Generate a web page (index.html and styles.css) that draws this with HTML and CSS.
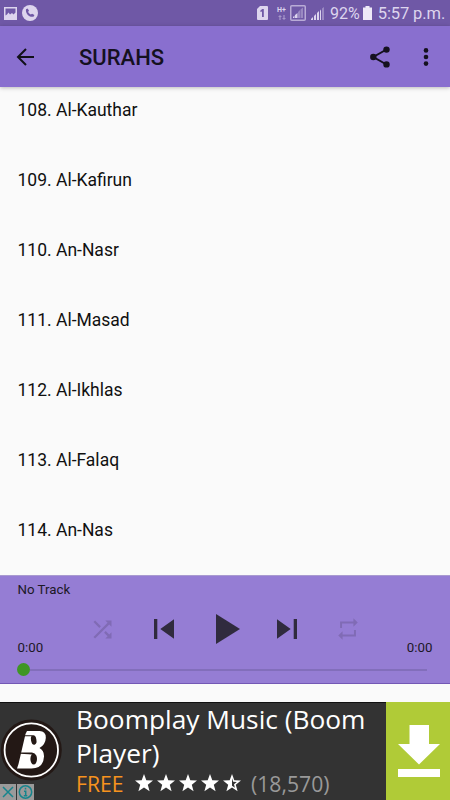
FILE: index.html
```html
<!DOCTYPE html>
<html lang="en">
<head>
<meta charset="utf-8">
<title>Surahs</title>
<link rel="stylesheet" href="styles.css">
</head>
<body>
<div class="screen">
  <div class="status">
    <svg class="st-photo" width="13" height="13" viewBox="0 0 13 13"><path fill-rule="evenodd" d="M0 0h13v13H0zM1.500 1.500v7l1.500-1 1.500-2 1.500 2 2-1.500 1.500 1.500 2-2V1.500z"/></svg>
    <svg class="st-call" width="16" height="16" viewBox="0 0 16 16"><circle cx="8" cy="8" r="8"/><path class="cut" d="M4 4.200 5.500 3.400 7 5.600 6.100 7c.6 1.200 1.500 2 2.700 2.600l1.300-.9 2.300 1.300-.6 1.600c-4.200 1.400-8.600-3-7.800-7.400z"/></svg>
    <svg class="st-sim" width="11" height="14" viewBox="0 0 11 14"><path d="M3 0h7q1 0 1 1v12q0 1-1 1H1q-1 0-1-1V3z"/><path class="cut" d="M3.400 4.600 5.300 3h1.500v8H5V5.500L3.400 6z"/></svg>
    <div class="st-net"><span>H+</span><svg width="8" height="5" viewBox="0 0 8 5"><path d="M2 0 0 2h1.400v3h1.200V2H4zM6 5 4 3h1.400V0h1.200v3H8z"/></svg></div>
    <svg class="st-box" width="16" height="16" viewBox="0 0 16 16"><rect class="frame" x=".75" y=".75" width="14.500" height="14.500" rx="1"/><path d="M3 13v-1l1.500-1.500V13zM5 13v-3l2.500-2V13z"/><path class="dim" d="M8 13V7l2-2v8zM10.500 13V4.500L13 2.500V13z"/></svg>
    <svg class="st-signal" width="13" height="13" viewBox="0 0 13 13"><path d="M0 13v-1l2-2v3zM3 13V9l2-2v6zM6 13V6l2-2v9z"/><path d="M9 13V3.500L10 2.500V13z"/><path class="dim" d="M11 13V1.500L13 0v13z"/></svg>
    <span class="st-pct">92%</span>
    <svg class="st-batt" width="9" height="14" viewBox="0 0 9 14"><path d="M2.500 0h4v1.500H9V14H0V1.500h2.500z"/></svg>
    <span class="st-time">5:57 p.m.</span>
  </div>
  <header class="toolbar">
    <svg class="back" width="18" height="18" viewBox="0 0 18 18"><path d="M9 1 1 9l8 8M1.300 9H17"/></svg>
    <h1>SURAHS</h1>
    <svg class="share" width="20" height="22" viewBox="0 0 20 22"><path d="M16.500 3.500 3.300 11l13.200 7.500"/><circle cx="16.500" cy="3.600" r="3.200"/><circle cx="3.300" cy="11" r="3.200"/><circle cx="16.500" cy="18.400" r="3.200"/></svg>
    <svg class="more" width="6" height="18" viewBox="0 0 6 18"><circle cx="3" cy="2.400" r="2.300"/><circle cx="3" cy="9" r="2.300"/><circle cx="3" cy="15.600" r="2.300"/></svg>
  </header>
  <ul class="list">
    <li>108. Al-Kauthar</li>
    <li>109. Al-Kafirun</li>
    <li>110. An-Nasr</li>
    <li>111. Al-Masad</li>
    <li>112. Al-Ikhlas</li>
    <li>113. Al-Falaq</li>
    <li>114. An-Nas</li>
  </ul>
  <section class="player">
    <div class="track">No Track</div>
    <div class="controls">
      <svg class="faded shuffle" width="27" height="27" viewBox="0 0 24 24"><path d="M10.590 9.170 5.410 4 4 5.410l5.170 5.170 1.420-1.410zM14.500 4l2.040 2.040L4 18.590 5.410 20 17.960 7.460 20 9.500V4h-5.500zm.33 9.410-1.410 1.410 3.130 3.130L14.500 20H20v-5.500l-2.040 2.040-3.130-3.130z"/></svg>
      <svg class="prev" width="20" height="20" viewBox="0 0 20 20"><path d="M0 0h3.300v20H0zM20 .3v19.400L6.300 10z"/></svg>
      <svg class="play" width="24" height="30" viewBox="0 0 24 30"><path d="M0 0v30l24-15z"/></svg>
      <svg class="next" width="20" height="20" viewBox="0 0 20 20"><path d="M16.700 0H20v20h-3.300zM0 .3v19.400L13.700 10z"/></svg>
      <svg class="faded repeat" width="26" height="26" viewBox="0 0 24 24"><path d="M6.500 7H17v3l4-4-4-4v3H4.700v6h1.800V7zm11 10H7v-3l-4 4 4 4v-3h12.300v-6h-1.800v4z"/></svg>
    </div>
    <div class="times"><span>0:00</span><span>0:00</span></div>
    <div class="seek"><i class="thumb"></i><i class="rail"></i></div>
  </section>
  <section class="ad">
    <div class="ad-art">
      <svg class="logo" width="62" height="62" viewBox="0 0 62 62"><circle cx="31.300" cy="31" r="30.500" fill="#231815"/><circle cx="31.300" cy="31" r="26.700" fill="none" stroke="#fff" stroke-width="1.800"/><path fill="#fff" d="M27 12h12.500q6.500 0 6.300 7-.3 6.500-6.300 10 4.700 2.500 4.500 8.500-.7 12.500-13.500 12H17l1.500-4.500 7-30z"/><g fill="#231815" stroke="none"><ellipse cx="33.700" cy="21" rx="2.700" ry="4.700" transform="rotate(-10 33.700 21)"/><ellipse cx="33.700" cy="40" rx="3.300" ry="5.500"/><path d="M24 16.300h8l1.500 1H24zM20 33.500h12l3 1.300-2 1.500q-2-1.500-13-1.500z"/></g></svg>
      <div class="badges">
        <svg width="16" height="16" viewBox="0 0 16 16"><path d="m3 3 10 10M13 3 3 13"/></svg>
        <svg width="17" height="16" viewBox="0 0 17 16"><circle cx="8.500" cy="8" r="6.200"/><path d="M8.500 3.800v1.700M7 7.200h1.700v4.500M6.800 11.700h3.500"/></svg>
      </div>
    </div>
    <div class="ad-copy">
      <div class="ad-title">Boomplay Music (Boom<br>Player)</div>
      <div class="ad-meta">
        <span class="free">FREE</span>
        <svg class="stars" width="107" height="18" viewBox="0 0 107 18"><defs><path id="s" d="m9 0 2.300 6.200 6.700.3-5.200 4.200 1.800 6.500L9 13.500l-5.600 3.700 1.800-6.500L0 6.500l6.700-.3z"/></defs><use href="#s"/><use href="#s" x="22"/><use href="#s" x="44"/><use href="#s" x="66"/><path fill-rule="evenodd" d="m97 0 2.300 6.200 6.700.3-5.200 4.200 1.800 6.500L97 13.500l-5.600 3.700 1.800-6.500L88 6.500l6.700-.3zM97 4.200v7.600l2.900 1.900-.9-3.500 2.800-2.200-3.600-.2z"/></svg>
        <span class="count">(18,570)</span>
      </div>
    </div>
    <div class="download"><svg width="42" height="52" viewBox="0 0 42 52"><path d="M11.500 0h19.500v19h11L21 39.500 0 19h11.500zM0 44h42v8H0z"/></svg></div>
  </section>
</div>
</body>
</html>
```
FILE: styles.css
```css
* { box-sizing: border-box; }
body { margin: 0; font-family: Roboto, "Liberation Sans", sans-serif; background: #fafafa; }
svg { display: block; flex: none; overflow: visible; }
.screen { width: 450px; height: 800px; display: flex; flex-direction: column; overflow: hidden; }

.status { height: 26px; flex: none; background: #6f58a6; display: flex; align-items: center; color: #ddd5ee; fill: #ddd5ee; white-space: nowrap; padding: 0 5px 0 4px; }
.status .cut { fill: #6f58a6; }
.status .dim { opacity: .4; }
.st-call { margin-left: 5px; }
.st-sim { margin-left: 219px; }
.st-net { margin-left: 9px; width: 10px; font-size: 7px; line-height: 7px; font-weight: 700; }
.st-net svg { margin: 1px 0 0 1px; opacity: .5; }
.st-box { margin-left: 4px; }
.st-box .frame { fill: none; stroke: #b9abd6; stroke-width: 1.500; }
.st-signal { margin-left: 5px; }
.st-pct { margin-left: 6px; width: 30px; font-size: 16px; line-height: 26px; padding-top: 2px; }
.st-batt { margin-left: 3px; fill: #eee9f7; }
.st-time { margin-left: 6px; font-size: 16.500px; line-height: 26px; padding-top: 2px; letter-spacing: -.1px; }

.toolbar { height: 61px; flex: none; background: #896fcf; display: flex; align-items: center; padding: 0 21px 0 17px; box-shadow: 0 1px 4px rgba(0,0,0,.25); z-index: 1; }
.back { fill: none; stroke: #111019; stroke-width: 2; }
.toolbar h1 { margin: 2px auto 0 44px; font-size: 22px; font-weight: 500; line-height: 28px; color: #15111f; }
.share { fill: #15111f; }
.share path { fill: none; stroke: #15111f; stroke-width: 2; }
.more { margin-left: 33px; fill: #15111f; }

.list { list-style: none; margin: 0; padding: 0; height: 488px; flex: none; display: grid; grid-auto-rows: 70px; }
.list li { padding: 12px 17.500px 0; font-size: 17.500px; line-height: 22px; color: #101010; }

.player { height: 109px; flex: none; background: #957dd4; border-top: 1px solid #a99bd0; border-bottom: 1px solid #7358b5; padding: 5px 17px 0; color: #1c1826; }
.track { font-size: 13.300px; line-height: 18px; padding-left: .5px; }
.controls { height: 24px; margin-top: 18px; display: flex; align-items: center; fill: #302b3e; }
.faded { fill: #806bb5; }
.shuffle { margin-left: 72px; }
.prev { margin-left: 38px; }
.play { margin-left: 42px; }
.next { margin-left: 37px; }
.repeat { margin-left: 38px; }
.times { display: flex; justify-content: space-between; padding: 0 .5px; margin-top: 1px; font-size: 13.300px; line-height: 12px; }
.seek { height: 13px; margin-top: 9px; display: flex; align-items: center; padding-right: 6px; }
.thumb { width: 13px; height: 13px; border-radius: 50%; background: #3f9624; }
.rail { flex: 1; height: 2px; background: #826ebb; }

.ad { height: 98px; margin-top: 18px; flex: none; display: flex; background: #333; border-top: 1px solid #111; font-family: "Open Sans", "Noto Sans", sans-serif; }
.ad-art { width: 76px; padding-top: 16px; flex: none; }
.badges { display: flex; gap: 1px; margin-top: 3px; fill: none; stroke: #16858d; stroke-width: 1.500; }
.badges svg { background: #9a9a9a; }
.ad-copy { width: 310px; flex: none; margin-top: -1px; color: #fff; white-space: nowrap; }
.ad-title { font-size: 26.300px; line-height: 34px; height: 68px; }
.ad-meta { display: flex; align-items: center; height: 28px; font-size: 21.200px; line-height: 28px; }
.free { color: #f7931e; width: 59px; }
.stars { fill: #fff; margin-top: -3px; }
.count { color: #999; margin-left: 9px; }
.download { flex: 1; background: #b0cb37; margin-top: -1px; padding: 23px 0 0 12px; fill: #fff; }
```
